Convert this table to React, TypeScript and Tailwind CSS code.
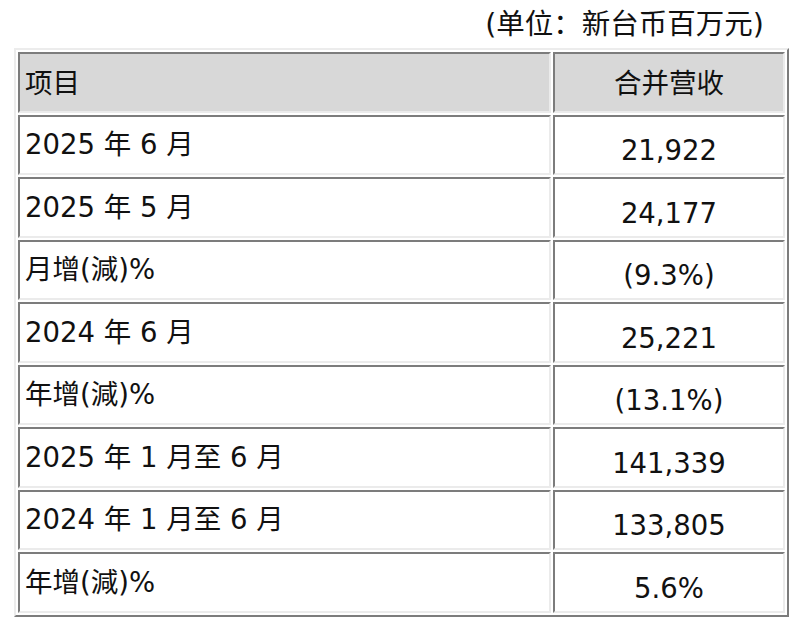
const rows = [
  { label: "2025 年 6 月", value: "21,922" },
  { label: "2025 年 5 月", value: "24,177" },
  { label: "月增(減)%", value: "(9.3%)" },
  { label: "2024 年 6 月", value: "25,221" },
  { label: "年增(減)%", value: "(13.1%)" },
  { label: "2025 年 1 月至 6 月", value: "141,339" },
  { label: "2024 年 1 月至 6 月", value: "133,805" },
  { label: "年增(減)%", value: "5.6%" },
];

const cell =
  "h-[60.5px] border-2 border-t-[#7c7c7c] border-l-[#7c7c7c] border-r-[#ebebeb] border-b-[#ebebeb] p-0";

export default function App() {
  return (
    <div className="min-h-[634px] w-[800px] bg-white font-['DejaVu_Sans','Noto_Sans_CJK_SC',sans-serif] text-[27.5px] leading-none text-[#111]">
      <div className="flex h-[48px] items-center justify-end pr-[36px] pt-[2px] text-[28.5px]">
        (单位：新台币百万元)
      </div>
      <table className="ml-[14px] w-[775px] border-separate border-spacing-[2px] border-2 border-t-[#ececec] border-l-[#ececec] border-r-[#7c7c7c] border-b-[#7c7c7c]">
        <thead>
          <tr className="bg-[#d8d8d8]">
            <th className={`${cell} w-[533px] pl-[5px] pt-[3px] text-left font-normal`}>项目</th>
            <th className={`${cell} pt-[3px] text-center font-normal`}>合并营收</th>
          </tr>
        </thead>
        <tbody>
          {rows.map((r, i) => (
            <tr key={i}>
              <td className={`${cell} pl-[5px] text-left`}>{r.label}</td>
              <td className={`${cell} pt-[12px] text-center`}>{r.value}</td>
            </tr>
          ))}
        </tbody>
      </table>
    </div>
  );
}
